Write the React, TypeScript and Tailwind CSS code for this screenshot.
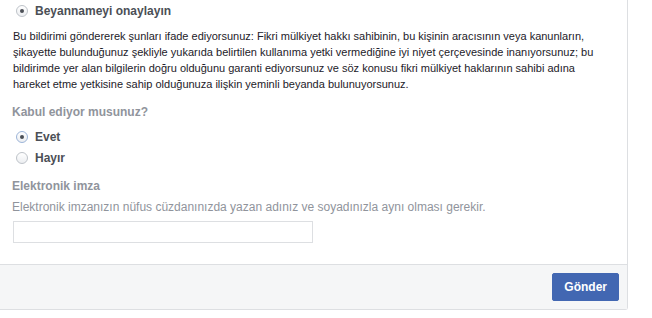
import React from "react";

function Radio({ checked, focused }: { checked?: boolean; focused?: boolean }) {
  return (
    <span
      className={`flex h-3 w-3 shrink-0 items-center justify-center rounded-full border bg-gradient-to-b from-white to-[#eceef1] ${
        focused ? "border-[#9cb4d8]" : "border-[#bec3c9]"
      }`}
    >
      {checked && <span className="h-1 w-1 rounded-full bg-[#4b4f56]" />}
    </span>
  );
}

export default function App() {
  return (
    <div className="h-[318px] w-[652px] bg-white font-['Liberation_Sans',Arial,sans-serif]">
      <div className="w-[628px] rounded-br-[3px] border-r border-b border-[#dddfe2]">
        <div className="px-3 pt-[3px] pb-[21px]">
          <label className="ml-1 flex items-center gap-[7px] text-xs leading-4 font-bold text-[#4b4f56]">
            <Radio checked />
            Beyannameyi onaylayın
          </label>

          <p className="mt-[9px] ml-px whitespace-nowrap text-[11px] leading-4 text-[#1d2129]">
            Bu bildirimi göndererek şunları ifade ediyorsunuz: Fikri mülkiyet hakkı sahibinin, bu kişinin aracısının veya kanunların,
            <br />
            şikayette bulunduğunuz şekliyle yukarıda belirtilen kullanıma yetki vermediğine iyi niyet çerçevesinde inanıyorsunuz; bu
            <br />
            bildirimde yer alan bilgilerin doğru olduğunu garanti ediyorsunuz ve söz konusu fikri mülkiyet haklarının sahibi adına
            <br />
            hareket etme yetkisine sahip olduğunuza ilişkin yeminli beyanda bulunuyorsunuz.
          </p>

          <p className="mt-3 text-xs leading-4 font-bold text-[#90949c]">Kabul ediyor musunuz?</p>

          <div className="mt-1.5 flex flex-col">
            <label className="ml-1 flex h-[21px] items-center gap-[7px] text-xs leading-4 font-bold text-[#4b4f56]">
              <Radio checked focused />
              Evet
            </label>
            <label className="ml-1 flex h-[21px] items-center gap-[7px] text-xs leading-4 font-bold text-[#4b4f56]">
              <Radio />
              Hayır
            </label>
          </div>

          <p className="mt-2.5 text-xs leading-4 font-bold text-[#90949c]">Elektronik imza</p>
          <p className="mt-[5px] text-xs leading-4 text-[#90949c]">
            Elektronik imzanızın nüfus cüzdanınızda yazan adınız ve soyadınızla aynı olması gerekir.
          </p>
          <input
            type="text"
            className="mt-1.5 ml-px block h-[22px] w-[300px] border border-[#dddfe2] bg-white px-1 text-xs outline-none"
          />
        </div>

        <div className="flex justify-end border-t border-[#dddfe2] bg-[#f5f6f7] py-2 pr-2">
          <button className="h-7 rounded-[2px] border border-[#4267b2] bg-[#4267b2] px-[11px] text-xs font-bold text-white">
            Gönder
          </button>
        </div>
      </div>
    </div>
  );
}
